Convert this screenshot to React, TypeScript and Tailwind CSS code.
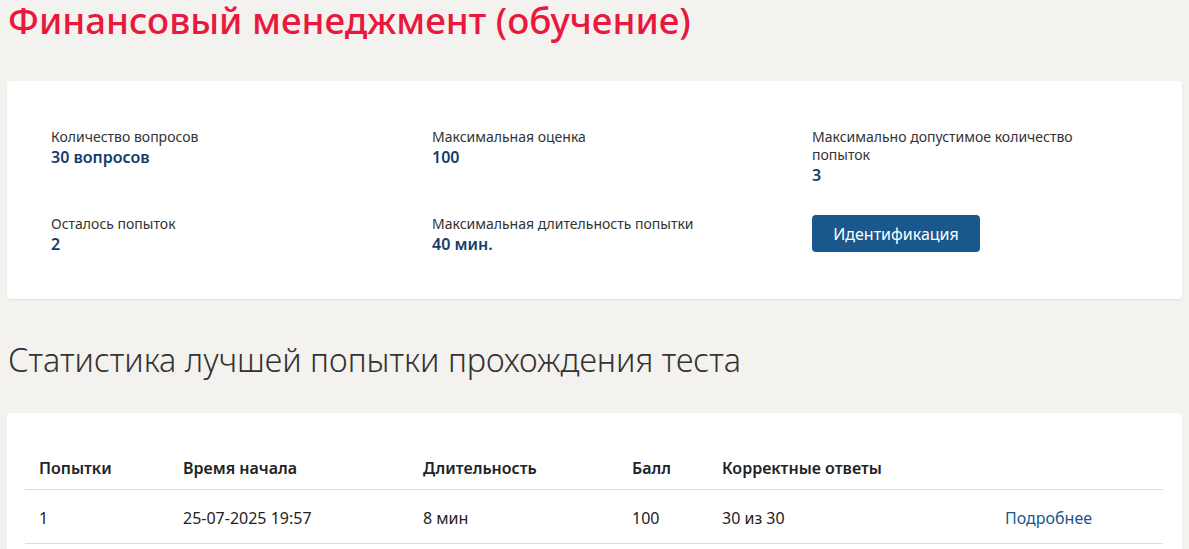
export default function App() {
  const info = [
    { label: 'Количество вопросов', value: '30 вопросов' },
    { label: 'Максимальная оценка', value: '100' },
    { label: 'Максимально допустимое количество попыток', value: '3' },
    { label: 'Осталось попыток', value: '2' },
    { label: 'Максимальная длительность попытки', value: '40 мин.' },
  ];

  return (
    <div className="min-h-screen bg-[#f3f2ef] px-[7px] font-['Noto_Sans',sans-serif] text-[#222]">
      <h1 className="pl-px text-[36.7px] leading-[40px] font-medium text-[#e8193c]">
        Финансовый менеджмент (обучение)
      </h1>

      <section className="mt-[41px] rounded bg-white px-[44px] pt-[47px] pb-[44px] shadow-[0_1px_2px_rgba(0,0,0,0.08)]">
        <div className="grid grid-cols-[381px_380px_280px] gap-y-[29px]">
          {info.map((item) => (
            <div key={item.label}>
              <div className="text-[14px] leading-[18px] text-[#333]">{item.label}</div>
              <div className="text-[16px] leading-[22px] font-semibold text-[#163b6b]">{item.value}</div>
            </div>
          ))}
          <div>
            <button className="h-[37px] w-[168px] rounded bg-[#1a578c] text-[16px] text-white">Идентификация</button>
          </div>
        </div>
      </section>

      <h2 className="mt-[40px] pl-px text-[32.4px] leading-[40px] font-light text-[#333]">
        Статистика лучшей попытки прохождения теста
      </h2>

      <section className="mt-[34px] rounded bg-white pt-[31px] pr-[19px] pb-[20px] pl-[18px]">
        <table className="w-full border-collapse text-left text-[16px]">
          <thead>
            <tr className="border-b border-[#dedede]">
              <th className="w-[158px] pt-[12px] pb-[8px] pl-[14px] leading-[25px] font-semibold">Попытки</th>
              <th className="w-[240px] pt-[12px] pb-[8px] leading-[25px] font-semibold">Время начала</th>
              <th className="w-[209px] pt-[12px] pb-[8px] leading-[25px] font-semibold">Длительность</th>
              <th className="w-[90px] pt-[12px] pb-[8px] leading-[25px] font-semibold">Балл</th>
              <th className="w-[283px] pt-[12px] pb-[8px] leading-[25px] font-semibold">Корректные ответы</th>
              <th className="pt-[12px] pb-[8px]"></th>
            </tr>
          </thead>
          <tbody>
            <tr className="border-b border-[#dedede]">
              <td className="pt-[16px] pb-[13px] pl-[14px] leading-[24px]">1</td>
              <td className="pt-[16px] pb-[13px] leading-[24px]">25-07-2025 19:57</td>
              <td className="pt-[16px] pb-[13px] leading-[24px]">8 мин</td>
              <td className="pt-[16px] pb-[13px] leading-[24px]">100</td>
              <td className="pt-[16px] pb-[13px] leading-[24px]">30 из 30</td>
              <td className="pt-[16px] pb-[13px] leading-[24px]">
                <a href="#" className="text-[#1a578c]">Подробнее</a>
              </td>
            </tr>
          </tbody>
        </table>
      </section>
    </div>
  );
}
